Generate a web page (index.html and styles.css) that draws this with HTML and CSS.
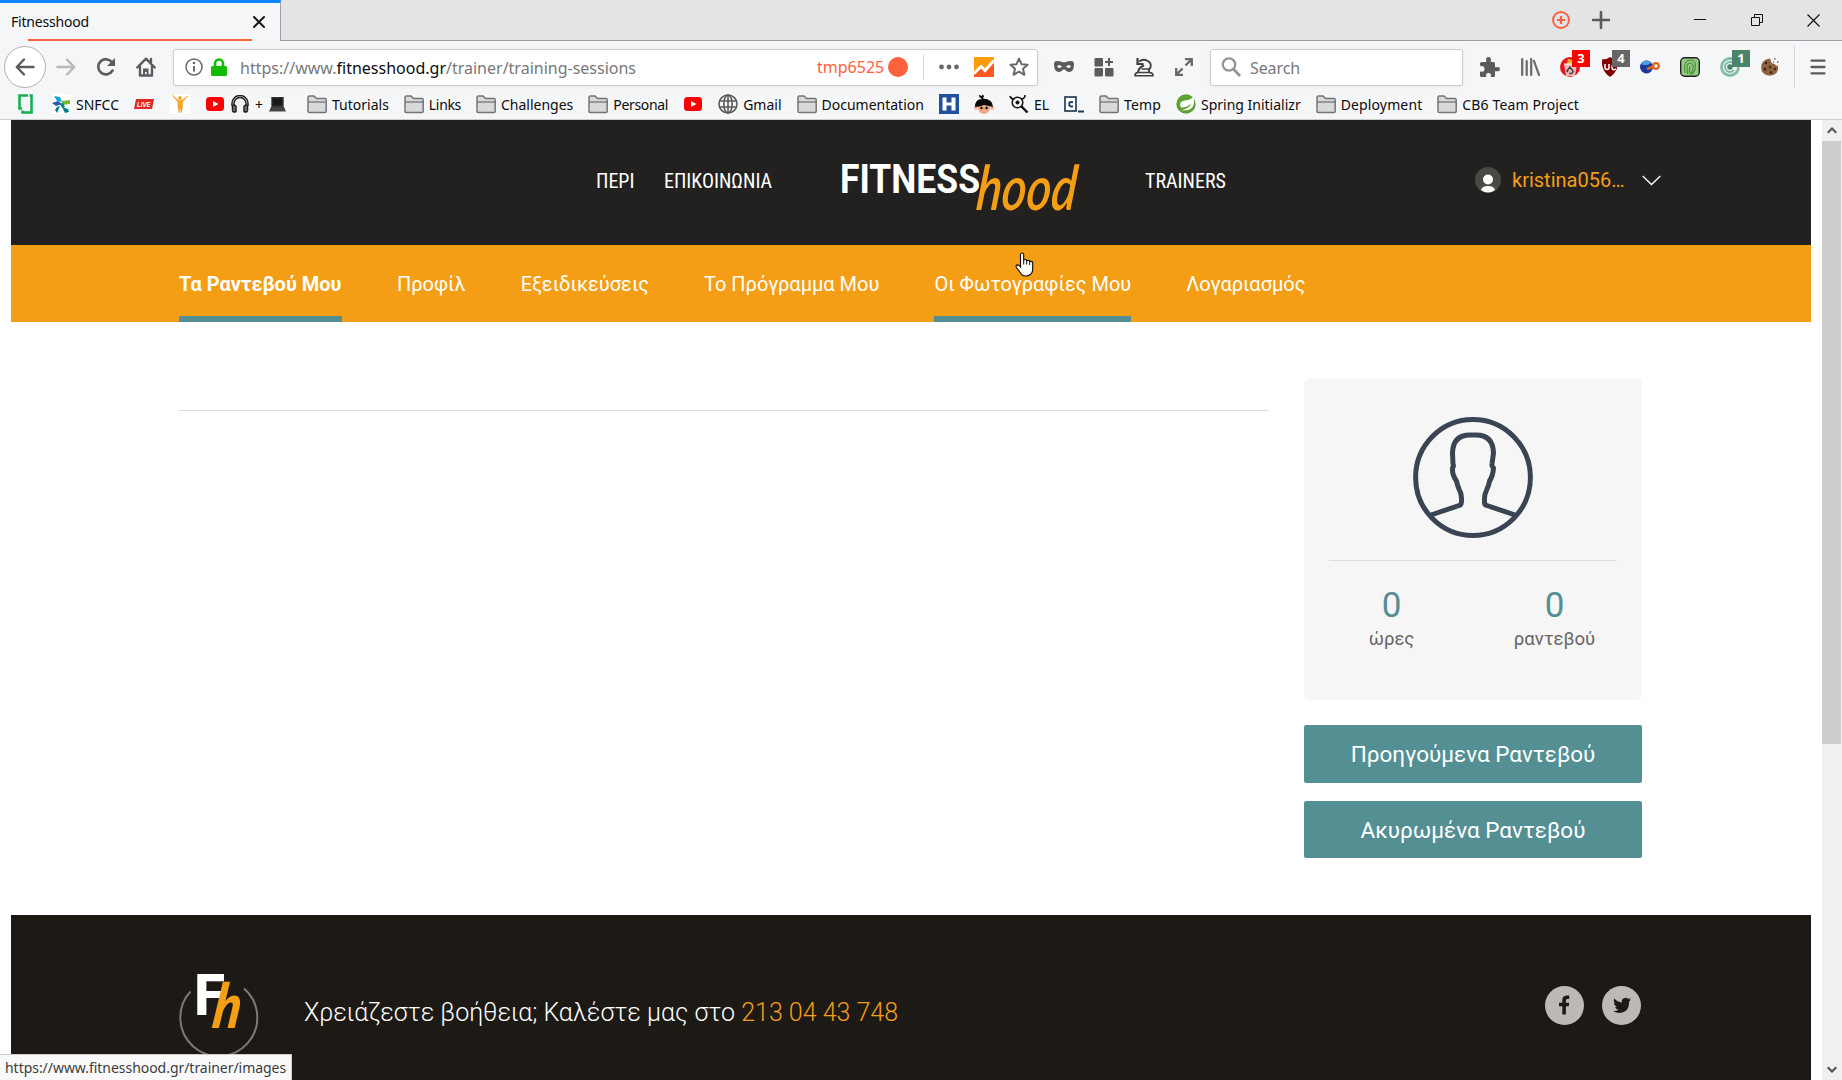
FILE: index.html
```html
<!DOCTYPE html>
<html lang="el">
<head>
<meta charset="utf-8">
<title>Fitnesshood</title>
<link rel="stylesheet" href="styles.css">
</head>
<body>
<svg class="defs" width="0" height="0">
  <symbol id="folder" viewBox="0 0 20 20"><path d="M1 17.500V3.500q0-1.500 1.500-1.500H7l2.500 2.500H18q1.200 0 1.200 1.300V17.500q0 1-1.200 1H2.200q-1.200 0-1.200-1z" fill="#d8d9db" stroke="#737476" stroke-width="1.500"/><path d="M1 8h18" stroke="#737476" stroke-width="1.300"/></symbol>
  <symbol id="youtube" viewBox="0 0 20 20"><rect x="1" y="3" width="18" height="14" rx="3.500" fill="#f00"/><path d="M8 7l5.500 3L8 13z" fill="#fff"/></symbol>
</svg>
<div class="tabs">
  <div class="tab"><span class="tab-title">Fitnesshood</span>
    <svg width="12" height="12" viewBox="0 0 12 12"><path d="M1 1l10 10M11 1L1 11" stroke="#1a1a1a" stroke-width="2" stroke-linecap="round"/></svg>
    <i class="container-line"></i></div>
  <div class="window-controls">
    <svg width="20" height="20" viewBox="0 0 20 20" fill="none" stroke="#ff613d"><circle cx="10" cy="10" r="8" stroke-width="1.900"/><path d="M10 6v8M6 10h8" stroke-width="2.200"/></svg>
    <svg class="new-tab" width="18" height="18" viewBox="0 0 18 18"><path d="M9 1v16M1 9h16" stroke="#5a5b5d" stroke-width="2.600" stroke-linecap="round"/></svg>
    <svg class="minimise" width="12" height="12" viewBox="0 0 12 12"><path d="M0 5.500h12" stroke="#111"/></svg>
    <svg class="restore" width="12" height="12" viewBox="0 0 12 12" fill="none" stroke="#111"><path d="M.5 3.500h8v8h-8zM3.500 3V.5h8v8H9"/></svg>
    <svg class="close" width="13" height="13" viewBox="0 0 13 13"><path d="M.5.5l12 12M12.500.5l-12 12" stroke="#111" stroke-width="1.200"/></svg>
  </div>
</div>
<div class="toolbar">
  <span class="back"><svg width="20" height="18" viewBox="0 0 20 18" fill="none" stroke="#5a5b5d" stroke-width="2.400" stroke-linecap="round" stroke-linejoin="round"><path d="M9 1.500L1.800 9 9 16.500M2 9h16.500"/></svg></span>
  <svg class="forward" width="20" height="18" viewBox="0 0 20 18" fill="none" stroke="#b8b9bb" stroke-width="2.400" stroke-linecap="round" stroke-linejoin="round"><path d="M11 1.500L18.200 9 11 16.500M18 9H1.500"/></svg>
  <svg class="reload" width="20" height="20" viewBox="0 0 20 20"><path d="M16.500 13.500A7.600 7.600 0 1 1 15.800 5" fill="none" stroke="#5a5b5d" stroke-width="2.600" stroke-linecap="round"/><path d="M19 1v8h-8z" fill="#5a5b5d"/></svg>
  <svg class="home" width="20" height="20" viewBox="0 0 20 20"><path d="M1.200 10.500L10 1.700l8.800 8.800M4 9.500V18.500h12V9.500M15 2v5" fill="none" stroke="#5a5b5d" stroke-width="2.400" stroke-linecap="round" stroke-linejoin="round"/><path d="M7 18v-6.500h5.500V18h-1.800v-3H9v3z" fill="#5a5b5d"/></svg>
  <div class="url-bar">
    <svg width="18" height="18" viewBox="0 0 18 18"><circle cx="9" cy="9" r="8" fill="none" stroke="#68696b" stroke-width="1.500"/><circle cx="9" cy="5" r="1.300" fill="#68696b"/><path d="M9 8v5.500" stroke="#68696b" stroke-width="2"/></svg>
    <svg class="lock" width="16" height="19" viewBox="0 0 16 19"><path d="M4 9V5.500a4 4 0 0 1 8 0V9" fill="none" stroke="#12bc00" stroke-width="2.600"/><rect y="8" width="16" height="10" rx="1.500" fill="#12bc00"/></svg>
    <span class="url">https://www.<b>fitnesshood.gr</b>/trainer/training-sessions</span>
    <span class="identity">tmp6525</span><i class="dot"></i><i class="url-sep"></i>
    <svg class="more" width="20" height="6" viewBox="0 0 20 6" fill="#68696b"><circle cx="2.500" cy="3" r="2.400"/><circle cx="10" cy="3" r="2.400"/><circle cx="17.500" cy="3" r="2.400"/></svg>
    <svg class="chart" width="20" height="20" viewBox="0 0 20 20"><rect width="20" height="20" rx="1" fill="#ff9c0a"/><path d="M0 16l7-7 4 4 9-10v17H0z" fill="#ff5722"/><path d="M0 16.500l7-7 4 4L20 3.500" fill="none" stroke="#fff" stroke-width="3"/></svg>
    <svg class="star" width="20" height="20" viewBox="0 0 20 20"><path d="M10 1.600l2.500 5.600 6.100.6-4.600 4 1.400 6L10 14.700l-5.400 3.100 1.400-6-4.600-4 6.100-.6z" fill="none" stroke="#68696b" stroke-width="2" stroke-linejoin="round"/></svg>
  </div>
  <div class="tools">
    <svg width="20" height="20" viewBox="0 0 20 20"><path d="M0 7q0-3 3-3 3-.2 7 1.500Q14 3.800 17 4q3 0 3 3 0 8-5 8-2 0-4-2.600h-2Q7 15 5 15 0 15 0 7z" fill="#5a5b5d"/><path d="M3 9.500q2-3 5 0-3 3-5 0zM12 9.500q3-3 5 0-2 3-5 0z" fill="#f5f6f8"/></svg>
    <svg width="20" height="20" viewBox="0 0 20 20" fill="#5a5b5d"><rect x=".5" y="1" width="8.500" height="8.500" rx="1"/><rect x=".5" y="11" width="8.500" height="8.500" rx="1"/><rect x="11" y="11" width="8.500" height="8.500" rx="1"/><path d="M14 1h2v3h3v2h-3v3h-2V6h-3V4h3z"/></svg>
    <svg width="20" height="20" viewBox="0 0 20 20" fill="none" stroke="#3f4042" stroke-width="1.900"><path d="M5 4.500Q9 1.500 13 3.500 18 6 16.500 10.500L15 12.500V15M10 8.500Q4.500 10.500 4 15.500"/><path d="M3.500 1v6h6" stroke-width="2.200"/><path d="M1 18.800q0-3.300 3-3.300h11.500q3.500 0 3.500 3.300zM7.500 12H15" stroke-width="1.600"/></svg>
    <svg width="20" height="20" viewBox="0 0 20 20" fill="none" stroke="#68696b" stroke-width="2.300"><path d="M11 2.200h6.800V9M17.500 2.500L11.500 8.500M2.200 11v6.800H9M2.500 17.500l6-6"/></svg>
  </div>
  <div class="search"><svg width="20" height="20" viewBox="0 0 20 20" fill="none" stroke="#939496" stroke-width="2.300"><circle cx="8" cy="7.500" r="6.200"/><path d="M12.500 12l6.500 7" stroke-width="2.600"/></svg><span>Search</span></div>
  <div class="addons">
    <svg width="20" height="20" viewBox="0 0 20 20" fill="#5a5b5d"><path d="M0 8V6.500q0-1.500 1.500-1.500h4q1.300-.2.700-1.400Q5.500 0 8.500 0t2.300 3.600Q10.200 4.800 11.500 5h2q1.500 0 1.500 1.500v3q.2 1.300 1.400.7Q20 9.500 20 12.200t-3.600 2q-1.200-.6-1.400.7v3.600q0 1.500-1.500 1.500h-2q-1.300-.2-.7-1.400Q11.500 16 8.500 16t-2.300 2.600Q6.800 19.800 5.500 20h-4Q0 20 0 18.500v-3.500q.3-1 1.500-.4Q4.500 15 4.500 12T1.500 9Q.3 9.500 0 8z"/></svg>
    <svg width="20" height="20" viewBox="0 0 20 20" stroke="#68696b" stroke-width="2.200" stroke-linecap="round"><path d="M2.200 2v16M6.700 4v14M11.200 2v16M14 4l5 14"/></svg>
    <span class="addon"><svg width="20" height="20" viewBox="0 0 20 20"><circle cx="10" cy="10" r="10" fill="#e8141c"/><path d="M7 7l1-5 4 1 3 4z" fill="#f5b428"/><path d="M4 7h13l-2 12H6z" fill="#f0b9b9"/><path d="M4 7h13" stroke="#fff"/><path d="M8 15l-1-1 3-4 3 4-1 2.500H9" fill="none" stroke="#444" stroke-width="1.500"/></svg><b class="badge red">3</b></span>
    <span class="addon"><svg width="20" height="20" viewBox="0 0 20 20"><path d="M10 0q3 2.500 8 2.500Q19 14 10 20 1 14 2 2.500 7 2.500 10 0z" fill="#800000"/><path d="M5 7v3.500q0 2 2 2t2-2V7M16 8q-4-2-4 2t4 2" fill="none" stroke="#fff" stroke-width="1.500"/></svg><b class="badge grey">4</b></span>
    <svg width="20" height="20" viewBox="0 0 20 20"><circle cx="6.500" cy="10" r="6.500" fill="#19389e"/><path d="M1 7q5-7 10-1-5 4-10 1z" fill="#4d9be0"/><circle cx="16" cy="9" r="2.800" fill="none" stroke="#df6520" stroke-width="2.300"/><path d="M13.500 9.500L7 12" stroke="#df6520" stroke-width="2.500"/></svg>
    <svg width="20" height="20" viewBox="0 0 20 20" fill="none"><rect x=".7" y=".7" width="18.600" height="18.600" rx="4" fill="#93cd7c" stroke="#222" stroke-width="1.400"/><path d="M5 16q-2-13 6-13 6 1 4 9-1 4-4 5M7.500 17q-2-11 3-11 4 1 2 7-1 3-2.500 4M10 9q-1 5-.5 7" stroke="#4d8f4a" stroke-width="1.200"/></svg>
    <span class="addon"><svg width="20" height="20" viewBox="0 0 20 20" fill="none" stroke="#80bda5"><circle cx="10" cy="10" r="8.500" stroke-width="2.800"/><path d="M14 13a5 5 0 1 1 0-6" stroke-width="2"/><circle cx="10" cy="10" r="2.800" fill="#4c846b" stroke="none"/></svg><b class="badge green">1</b></span>
    <svg width="20" height="20" viewBox="0 0 20 20"><path d="M9.500 1.500q2 1 1.500 3.500 1 2 3.500 2Q16 9 18 9q1 9-8 9.700Q1 18.500 1.200 10 1.500 2.500 9.500 1.500z" fill="#8d6240"/><g fill="#3b2413"><circle cx="6" cy="6" r="1.300"/><circle cx="5" cy="12" r="1.500"/><circle cx="10" cy="10" r="1.200"/><circle cx="11" cy="15.500" r="1.300"/><circle cx="15" cy="12" r="1.200"/></g><path d="M14 2h1.500M17 5h1.500M13 5h1" stroke="#8d6240" stroke-width="1.500"/></svg>
  </div>
  <i class="toolbar-sep"></i>
  <svg width="16" height="16" viewBox="0 0 16 16" stroke="#5a5b5d" stroke-width="2.300" stroke-linecap="round"><path d="M1.500 1.700h13M1.500 8h13M1.500 14.300h13"/></svg>
</div>
<div class="bookmarks">
  <span class="mark"><svg width="15" height="20" viewBox="0 0 15 20" fill="none" stroke="#13b04b" stroke-width="2.600"><path d="M10 1.500H1.500V14.500H4M13.500 4V18.500H4.500V16.500M11.500 1.500h2V4"/></svg></span>
  <span class="mark snfcc"><svg width="19" height="20" viewBox="0 0 19 20"><rect width="19" height="20" fill="#fff"/><path d="M2 2l6 1 2 5-5-1z" fill="#16a0da"/><path d="M0 9l6-2 4 3-6 2z" fill="#2a5ba8"/><path d="M10 7l8-1v4l-8 1z" fill="#76b72e"/><path d="M8 10l3-1 2 4-3 1zM8 12l-3 7-2-3 2-3z" fill="#00808d"/><path d="M10 13l6 2 1 3-4 1z" fill="#00808d"/></svg><span>SNFCC</span></span>
  <span class="mark"><svg width="20" height="10" viewBox="0 0 20 10"><path d="M2 0h18l-2 10H0z" fill="#dc2a22"/><text x="3" y="8" class="live" textLength="13.500" lengthAdjust="spacingAndGlyphs">LIVE</text></svg></span>
  <span class="mark runner"><svg width="20" height="20" viewBox="0 0 20 20"><rect width="20" height="20" fill="#fff"/><circle cx="10" cy="4" r="1.900" fill="#f4a62a"/><path d="M2 1l6.500 5.500h3L18 2l-5.500 6v5l-1 6-1.500-5-1 5-1-6V8z" fill="#f4a62a" stroke="#f4a62a" stroke-width=".6"/></svg></span>
  <span class="mark"><svg width="20" height="20"><use href="#youtube"/></svg><svg class="phones" width="18" height="18" viewBox="0 0 18 18" fill="none" stroke="#222" stroke-width="1.500"><path d="M3 11V8.500a6 6 0 0 1 12 0V11M1 11V8.500a8 8 0 0 1 16 0V11"/><path d="M1.500 10.500q3-1 3.500 1v5q-3 1.500-3.500-1zM16.500 10.500q-3-1-3.500 1v5q3 1.500 3.500-1z" fill="#777"/></svg><span class="plus">+</span><svg class="laptop" width="17" height="15" viewBox="0 0 17 15"><path d="M3 .7h11v8.500H3z" fill="#181818" stroke="#333" stroke-width="1.400"/><path d="M2 10h13l2 4.500H0z" fill="#444"/></svg></span>
  <span class="mark tutorials"><svg width="20" height="20"><use href="#folder"/></svg><span>Tutorials</span></span>
  <span class="mark"><svg width="20" height="20"><use href="#folder"/></svg><span class="tight">Links</span></span>
  <span class="mark"><svg width="20" height="20"><use href="#folder"/></svg><span>Challenges</span></span>
  <span class="mark"><svg width="20" height="20"><use href="#folder"/></svg><span class="tight">Personal</span></span>
  <span class="mark"><svg width="20" height="20"><use href="#youtube"/></svg></span>
  <span class="mark"><svg width="20" height="20" viewBox="0 0 20 20" fill="none" stroke="#5a5b5d" stroke-width="1.600"><circle cx="10" cy="10" r="9"/><ellipse cx="10" cy="10" rx="4.200" ry="9"/><path d="M10 1v18M1.500 7h17M1.500 13h17"/></svg><span>Gmail</span></span>
  <span class="mark"><svg width="20" height="20"><use href="#folder"/></svg><span>Documentation</span></span>
  <span class="mark"><svg width="20" height="20" viewBox="0 0 20 20"><rect width="20" height="20" fill="#2250a0"/><path d="M3.500 3.500h4v5h5v-5h4v13h-4v-5h-5v5h-4z" fill="#fff"/></svg></span>
  <span class="mark"><svg width="20" height="20" viewBox="0 0 20 20"><circle cx="10" cy="13.500" r="6.300" fill="#f3a786"/><circle cx="1.800" cy="14" r="1.800" fill="#f3a786"/><circle cx="18.200" cy="14" r="1.800" fill="#f3a786"/><path d="M1 13Q1 5 8 5 4 2 5 1l3 1q0-3 2 0l-1 2.500Q19 5 19 13q-4-1-9-2-5 2-9 2z" fill="#0b0b0b"/><circle cx="7.500" cy="14" r="1.200"/><circle cx="12.500" cy="14" r="1.200"/></svg></span>
  <span class="mark"><svg width="20" height="20" viewBox="0 0 20 20" fill="none" stroke="#111"><circle cx="8.500" cy="8.500" r="5.300" stroke-width="1.500"/><circle cx="8.500" cy="8.500" r="1.600" fill="#111"/><path d="M1 2q1 3.500 4.500 3M16 1q0 4-4 4" stroke-width="1.600"/><path d="M12 12l6.500 6.500" stroke-width="2.400"/></svg><span>EL</span></span>
  <span class="mark"><svg width="20" height="20" viewBox="0 0 20 20"><rect x="1" y="3" width="11" height="14" fill="#fff" stroke="#204056" stroke-width="1.700"/><path d="M9 8.200q-3.800-1-3.800 2t3.800 2M14 17.500h6" fill="none" stroke="#204056" stroke-width="2"/></svg></span>
  <span class="mark"><svg width="20" height="20"><use href="#folder"/></svg><span class="loose">Temp</span></span>
  <span class="mark"><svg width="20" height="20" viewBox="0 0 20 20"><circle cx="10" cy="10" r="9.700" fill="#5fa134"/><path d="M17.500 2.500Q20 14.500 11 16.300H5Q13 15 15.500 9q-4 4.500-10.500 4.500Q2 7.500 9 6.500 15 6 17.500 2.500z" fill="#fff"/></svg><span>Spring Initializr</span></span>
  <span class="mark"><svg width="20" height="20"><use href="#folder"/></svg><span class="loose">Deployment</span></span>
  <span class="mark"><svg width="20" height="20"><use href="#folder"/></svg><span class="loose">CB6 Team Project</span></span>
</div>
<div class="viewport">
  <div class="page">
    <header class="header">
      <span class="menu-link link-about">ΠΕΡΙ</span>
      <span class="menu-link link-contact">ΕΠΙΚΟΙΝΩΝΙΑ</span>
      <svg class="logo" width="250" height="90" viewBox="-2 0 250 90">
        <text x="0" y="43" class="logo-fitness" textLength="140" lengthAdjust="spacingAndGlyphs">FITNESS</text>
        <text x="0" y="0" class="logo-hood" transform="translate(135 60) skewX(-6)" textLength="100" lengthAdjust="spacingAndGlyphs">hood</text>
      </svg>
      <span class="menu-link link-trainers">TRAINERS</span>
      <span class="user"><svg width="26" height="26" viewBox="0 0 26 26"><circle cx="13" cy="13" r="13" fill="#4a4946"/><circle cx="13" cy="12.500" r="5" fill="#fff"/><path d="M6 23q1-4 7-4t7 4q-7 5-14 0z" fill="#fff"/></svg><span class="user-name">kristina056…</span><svg class="chevron" width="19" height="11" viewBox="0 0 19 11"><path d="M.7 1l8.800 8.500L18.300 1" fill="none" stroke="#fff" stroke-width="1.300"/></svg></span>
    </header>
    <nav class="nav">
      <a class="current">Τα Ραντεβού Μου</a>
      <a>Προφίλ</a>
      <a>Εξειδικεύσεις</a>
      <a>Το Πρόγραμμα Μου</a>
      <a class="hover">Οι Φωτογραφίες Μου</a>
      <a>Λογαριασμός</a>
    </nav>
    <main class="main">
      <section class="sessions"><hr></section>
      <aside class="side">
        <div class="card">
          <svg width="120" height="121" viewBox="0 0 120 121" fill="none" stroke="#3a4452" stroke-width="5"><ellipse cx="60" cy="60.500" rx="57.400" ry="57.900"/><path d="M18 98L46 88.500Q48.500 88 48.500 84 49 77 46 72 44 67 43.500 64 39 58 39.500 51 41 49 40 47L39.500 36Q40 18 57 18h6Q80 18 80.500 36L79 47Q78.500 49 80.500 51 80 59 76.500 64 76 68 74 72 71 78 71.500 84 71 88 74 88.500L102 98" stroke-linejoin="round"/></svg>
          <hr>
          <div class="stats">
            <div><strong>0</strong><span>ώρες</span></div>
            <div><strong>0</strong><span>ραντεβού</span></div>
          </div>
        </div>
        <a class="button past">Προηγούμενα Ραντεβού</a>
        <a class="button cancelled">Ακυρωμένα Ραντεβού</a>
      </aside>
    </main>
    <footer class="footer">
      <svg class="footer-logo" width="80" height="92" viewBox="0 0 80 92" fill="none"><path d="M11.500 23.500A38.500 38.500 0 1 0 65 20.500" stroke="#7c7a77" stroke-width="2"/><text x="15" y="46.500" class="mark-f" textLength="31" lengthAdjust="spacingAndGlyphs">F</text><text x="0" y="0" class="mark-h" transform="translate(32 60) skewX(-8)" textLength="28" lengthAdjust="spacingAndGlyphs">h</text></svg>
      <p class="help">Χρειάζεστε βοήθεια; Καλέστε μας στο <span class="phone">213 04 43 748</span></p>
      <div class="social">
        <svg width="39" height="39" viewBox="0 0 39 39"><circle cx="19.500" cy="19.500" r="19.500" fill="#bdb9b7"/><path d="M17.300 28.500v-8.300H14v-3.400h3.300v-2.500q0-4.500 4.300-4.800h2.600v3.400h-1.800q-1.500 0-1.500 1.600v2.300h3.300l-.4 3.400h-2.900v8.300z" fill="#1d1a16"/></svg>
        <svg width="39" height="39" viewBox="0 0 39 39"><circle cx="19.500" cy="19.500" r="19.500" fill="#bdb9b7"/><path d="M29 13.500q-1 .4-2 .5 1.100-.6 1.500-1.900-1.100.6-2.300.9a3.700 3.700 0 0 0-6.300 3.400q-4.600-.3-7.600-3.900-1.500 3.200 1.100 5-.9 0-1.600-.4.200 3 3 3.700-.8.200-1.700.1.900 2.500 3.500 2.600-2.300 1.800-5.500 1.500 6.500 3.700 12 .2 4-2.800 4-8.800v-.9q1.200-.9 1.900-2z" fill="#1d1a16"/></svg>
      </div>
    </footer>
  </div>
  <div class="scrollbar">
    <svg width="10" height="7" viewBox="0 0 10 7" fill="none" stroke="#505050" stroke-width="2"><path d="M.7 5.800L5 1.500l4.300 4.300"/></svg>
    <i class="thumb"></i>
    <svg class="down" width="10" height="7" viewBox="0 0 10 7" fill="none" stroke="#505050" stroke-width="2"><path d="M.7 1.200L5 5.500l4.300-4.300"/></svg>
  </div>
</div>
<svg class="cursor" width="19" height="25" viewBox="0 0 19 25"><path d="M5.500 15V2.500q.2-1.500 1.600-1.500t1.600 1.500V8q2.500-1.300 3 .7 2.500-1 3 .8 3-.5 3 1.500v6q0 6.500-6.500 7-4 .3-6-3.500L1.200 15q-.5-2 1.200-2.200Q4 13 5.500 15z" fill="#fff" stroke="#111" stroke-width="1.200"/><path d="M8.700 8v4.500M11.700 9v3.500M14.700 10v3" stroke="#111"/></svg>
<div class="status">https://www.fitnesshood.gr/trainer/images</div>
</body>
</html>
```
FILE: styles.css
```css
* { box-sizing: border-box; }
body { margin: 0; width: 1842px; height: 1080px; overflow: hidden; position: relative; background: #fff; font-family: "Noto Sans", sans-serif; display: flex; flex-direction: column; }
svg { display: block; flex: none; }
.defs { position: absolute; }

.tabs { height: 41px; background: #e3e4e6; border-bottom: 1px solid #a0a0a4; display: flex; justify-content: space-between; flex: none; }
.tab { position: relative; width: 281px; height: 41px; background: #f5f6f8; border-top: 3px solid #0a84ff; border-right: 1px solid #a0a0a4; display: flex; align-items: center; justify-content: space-between; padding: 0 15px 1px 11px; font-size: 14px; color: #0c0c0d; }
.tab-title { letter-spacing: -.19px; }
.container-line { position: absolute; left: 28px; right: 28px; bottom: 0; height: 2px; background: #ff613d; }
.window-controls { display: flex; align-items: center; padding-right: 22px; }
.new-tab { margin-left: 21px; }
.minimise { margin-left: 84px; }
.restore { margin-left: 45px; }
.close { margin-left: 44px; }

.toolbar { height: 50px; background: #f5f6f8; display: flex; align-items: center; padding: 2px 16px 0 4px; flex: none; }
.back { width: 42px; height: 42px; border: 1px solid #b1b1b4; border-radius: 50%; background: #fff; display: flex; align-items: center; justify-content: center; flex: none; }
.forward { margin-left: 10px; }
.reload { margin-left: 20px; }
.home { margin-left: 20px; }
.url-bar { margin-left: 17px; width: 865px; height: 37px; background: #fff; border: 1px solid #ccc; border-radius: 3px; display: flex; align-items: center; padding-left: 11px; box-shadow: 0 1px 4px rgba(0,0,0,.06); flex: none; }
.lock { margin-left: 8px; }
.url { margin-left: 13px; padding-top: 2px; width: 397px; color: #77787a; font-size: 16px; white-space: nowrap; }
.url b { font-weight: 400; color: #0c0c0d; }
.identity { margin-left: 180px; width: 66px; color: #ff613d; font-size: 16px; }
.dot { margin-left: 5px; width: 20px; height: 20px; border-radius: 50%; background: #ff613d; }
.url-sep { margin-left: 15px; width: 1px; height: 26px; background: #d7d7db; }
.more { margin-left: 15px; }
.chart, .star { margin-left: 15px; }
.tools { display: flex; gap: 20px; margin-left: 16px; }
.search { margin-left: 16px; width: 253px; height: 37px; background: #fff; border: 1px solid #ccc; border-radius: 3px; display: flex; align-items: center; gap: 9px; padding-left: 10px; color: #77787a; font-size: 16px; box-shadow: 0 1px 4px rgba(0,0,0,.06); flex: none; }
.search span { padding-top: 2px; letter-spacing: -.1px; }
.addons { display: flex; gap: 20px; margin-left: 17px; }
.addon { position: relative; }
.badge { position: absolute; left: 12px; top: -7px; width: 18px; height: 17px; color: #fff; font-size: 13px; line-height: 16px; text-align: center; }
.red { background: #f00; }
.grey { background: #666; }
.green { background: #4c846b; }
.toolbar-sep { width: 1px; height: 42px; background: #d7d7db; margin: 0 15px 0 14px; }

.bookmarks { height: 29px; background: #f5f6f8; border-bottom: 1px solid #ccc; display: flex; align-items: center; gap: 15px; padding-left: 18px; padding-bottom: 2px; font-size: 14px; color: #0c0c0d; flex: none; }
.mark { display: flex; align-items: center; gap: 5px; flex: none; }
.mark span { padding-top: 1px; }
.mark .tight { letter-spacing: -.33px; }
.mark .loose { letter-spacing: .13px; }
.snfcc { margin-left: 4px; }
.runner { margin-left: 1px; }
.tutorials { margin-left: 6px; }
.phones { margin-left: 1px; }
.plus { width: 10px; text-align: center; }
.live { font: italic 700 7.5px "Liberation Sans", sans-serif; fill: #fff; }

.viewport { display: flex; height: 960px; flex: none; }
.page { width: 1800px; margin: 0 11px; height: 960px; font-family: Roboto, sans-serif; display: flex; flex-direction: column; }
.header { height: 125px; background: #22211f; display: flex; align-items: flex-start; padding-left: 585px; color: #fff; flex: none; }
.menu-link { margin-top: 50px; font-size: 20px; line-height: 22px; font-stretch: 75%; white-space: nowrap; }
.link-about { width: 68px; }
.link-contact { width: 174px; }
.logo { margin-top: 30px; }
.logo-fitness { font: 700 41px Roboto, sans-serif; fill: #fff; }
.logo-hood { font: italic 600 62px Lato, sans-serif; fill: #f49e16; }
.link-trainers { width: 80px; margin-left: 57px; }
.user { display: flex; align-items: center; margin: 47px 0 0 250px; color: #f49e16; font-size: 20px; height: 26px; }
.user-name { margin-left: 11px; }
.chevron { margin-left: 17px; }

.nav { height: 77px; background: #f49e16; padding-left: 168px; display: flex; gap: 55px; color: #fff; font-size: 20px; flex: none; }
.nav a { height: 77px; line-height: 79px; border-bottom: 6px solid transparent; }
.nav .current { width: 163px; font-weight: 700; border-color: #548f94; white-space: nowrap; }
.nav .hover { border-color: #548f94; }

.main { height: 593px; display: flex; justify-content: space-between; padding: 57px 169px 0 168px; flex: none; }
hr { border: 0; height: 1px; background: #dcdcdc; margin: 0; }
.sessions { width: 1089px; padding-top: 31px; }
.side { width: 338px; }
.card { height: 321px; background: #f6f6f6; border-radius: 5px; padding: 38px 25px 0; }
.card svg { margin: 0 auto 22px; }
.stats { display: flex; justify-content: space-between; padding-top: 24px; }
.stats div { width: 125px; display: flex; flex-direction: column; align-items: center; color: #666; font-size: 18.5px; line-height: 26px; }
.stats strong { font-weight: 400; font-size: 35px; line-height: 41px; color: #548f94; }
.button { display: flex; justify-content: center; align-items: center; background: #548f94; border-radius: 2px; color: #fff; font-size: 22.5px; }
.past { height: 58px; margin-top: 25px; }
.cancelled { height: 57px; margin-top: 18px; }

.footer { height: 165px; background: #1d1a16; display: flex; padding: 0 170px 0 168px; color: #fff; flex: none; }
.footer-logo { margin-top: 53px; }
.mark-f { font: 800 58px Roboto, sans-serif; fill: #fff; }
.mark-h { font: italic 900 62px Lato, sans-serif; fill: #f49e16; }
.help { margin: 83px 0 0 45px; font-size: 25px; line-height: 30px; font-weight: 300; white-space: nowrap; }
.phone { color: #f49e16; }
.social { display: flex; gap: 18px; margin: 71px 0 0 auto; }

.scrollbar { width: 20px; background: #f0f0f0; display: flex; flex-direction: column; align-items: center; padding-top: 7px; }
.thumb { width: 19px; height: 603px; margin: 7px 1px 0 0; background: #cdcdcd; }
.down { margin: auto 0 7px; }

.cursor { position: absolute; left: 1015px; top: 252px; }
.status { position: absolute; left: 0; bottom: 0; width: 292px; height: 26px; background: #f9f9f9; border: solid #ccc; border-width: 1px 1px 0 0; padding-left: 5px; font-size: 14px; line-height: 26px; letter-spacing: -.04px; color: #3c3c3c; }
```
